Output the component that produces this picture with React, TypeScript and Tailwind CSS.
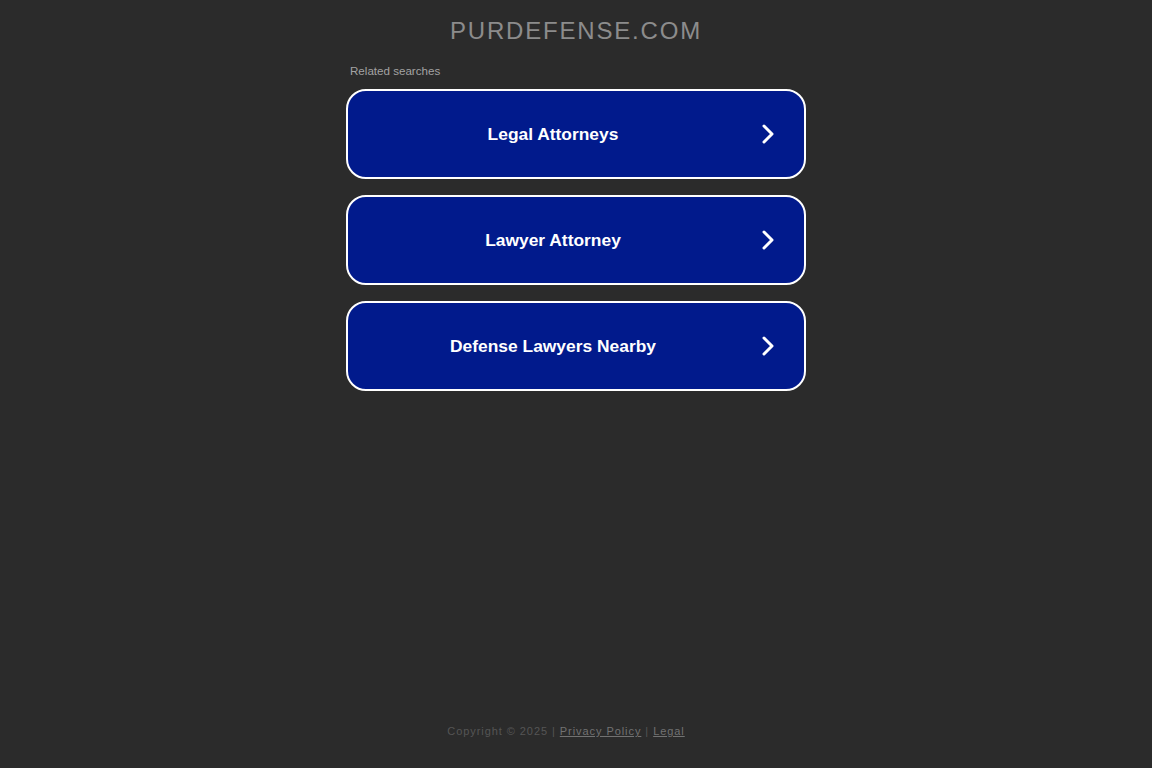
export default function App() {
  const searches = ["Legal Attorneys", "Lawyer Attorney", "Defense Lawyers Nearby"]

  return (
    <div
      className="flex min-h-screen flex-col bg-[#2b2b2b]"
      style={{ fontFamily: '"Liberation Sans", Arial, sans-serif' }}
    >
      <main className="flex flex-1 flex-col items-center">
        <h1 className="mt-[17px] text-[24px] leading-[28px] tracking-[0.075em] text-[#8c8c8c]">
          PURDEFENSE.COM
        </h1>
        <div className="mt-[19px] w-[460px]">
          <div className="pl-[4px] text-[11.6px] leading-[14px] text-[#a3a3a3]">Related searches</div>
          <div className="mt-[11px] flex flex-col gap-[16px]">
            {searches.map((s) => (
              <a
                key={s}
                href="#"
                className="flex h-[90px] items-center rounded-[20px] border-2 border-white bg-[#011a8c] text-white"
              >
                <span className="flex-1 pr-[2px] text-center text-[17.4px] font-bold">{s}</span>
                <svg
                  className="mr-[30px] h-[20px] w-[14px]"
                  viewBox="0 0 14 20"
                  fill="none"
                  stroke="white"
                  strokeWidth="3"
                  strokeLinecap="round"
                  strokeLinejoin="round"
                >
                  <path d="M4 2l8 8-8 8" />
                </svg>
              </a>
            ))}
          </div>
        </div>
      </main>
      <footer className="pb-[30px] pr-[20px] text-center text-[11px] leading-[14px] tracking-[0.085em] text-[#555555]">
        Copyright © 2025 |{" "}
        <a href="#" className="text-[#727272] underline">
          Privacy Policy
        </a>{" "}
        |{" "}
        <a href="#" className="text-[#727272] underline">
          Legal
        </a>
      </footer>
    </div>
  )
}
